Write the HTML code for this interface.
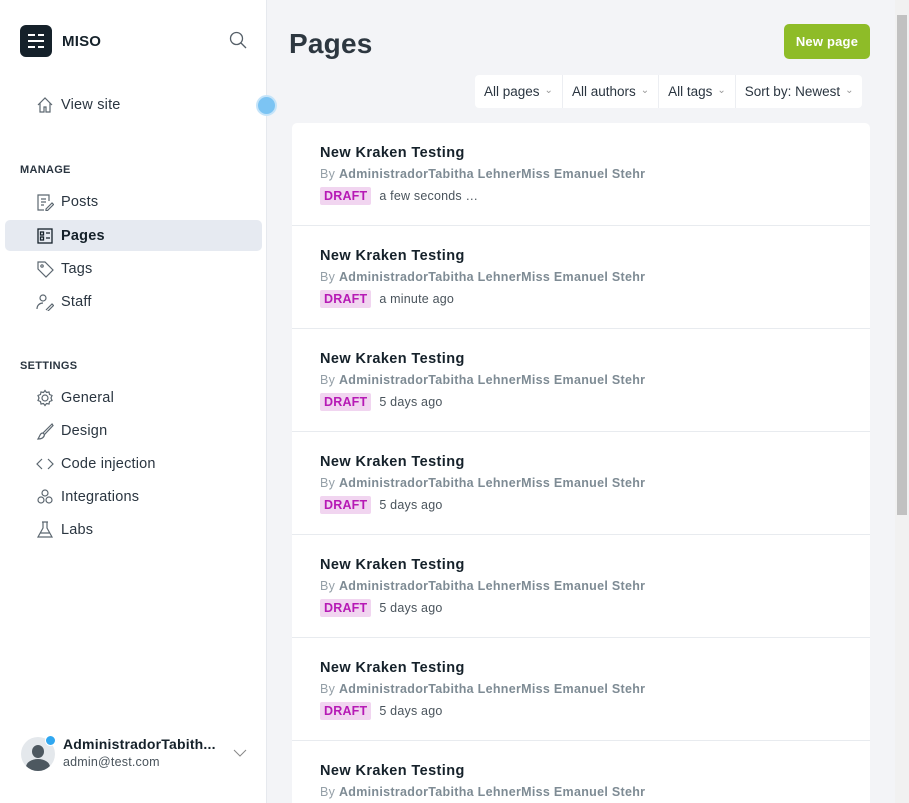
<!DOCTYPE html>
<html style="overflow:hidden;height:803px"><head><meta charset="utf-8"><style>
*{box-sizing:border-box;margin:0;padding:0}
body{width:909px;height:803px;overflow:hidden;font-family:"Liberation Sans",sans-serif;background:#f3f4f7;position:relative;color:#15212a;letter-spacing:.2px}
.side{position:absolute;left:0;top:0;width:267px;height:803px;background:#fff;border-right:1px solid #e6e9ee}
.logo{position:absolute;left:20px;top:25px;width:32px;height:32px;border-radius:6px;background:#15212a}
.logo i{position:absolute;height:2px;background:#fff}
.brand{position:absolute;left:62px;top:33px;font-weight:bold;font-size:15px}
.nav{position:absolute;left:5px;width:257px;height:31px;display:flex;align-items:center;padding-left:32px;font-size:14.5px;color:#2a3540}
.nav svg{position:absolute;left:31px;top:7px}
.nav span{margin-left:24px}
.nav.act{background:#e6eaf1;border-radius:5px;font-weight:bold;color:#15212a}
.hd{position:absolute;left:20px;font-size:11px;font-weight:bold;letter-spacing:.3px;color:#2a3540}
h1{position:absolute;left:289px;top:28px;font-size:28px;font-weight:bold;color:#2d3740}
.btn{position:absolute;left:784px;top:24px;width:86px;height:35px;border-radius:5px;background:#8ebc28;color:#fff;font-weight:bold;font-size:13px;text-align:center;line-height:35px}
.filt{position:absolute;left:475px;top:75px;height:33px;background:#fff;border-radius:4px;display:flex;font-size:13.5px;color:#2a3540;letter-spacing:0}
.filt div{padding:0 9px;line-height:33px;border-right:1px solid #eceef2}
.filt div:last-child{border:0}
.filt div:after{content:"⌄";color:#999;font-size:10px;margin-left:5px;position:relative;top:-3px}
.list{position:absolute;left:292px;top:123px;width:578px;height:680px;background:#fff;border-radius:5px 5px 0 0;overflow:hidden}
.row{height:103px;border-bottom:1px solid #e8ebef;padding:22px 28px 0}
.t{font-weight:bold;font-size:14.5px;color:#15212a;letter-spacing:.4px}
.by{font-size:12.5px;color:#95a0a8;margin-top:6px;letter-spacing:.3px}
.by b{color:#7e8b94}
.m{margin-top:6px;font-size:12.5px;color:#4a545c;display:flex;align-items:center}
.d{background:#f1d5f0;color:#b61ab5;font-weight:bold;padding:2px 4px;border-radius:2px;margin-right:8px;font-size:12.5px}
.sb{position:absolute;left:895px;top:0;width:14px;height:803px;background:#f1f1f1}
.sb i{position:absolute;left:2px;top:15px;width:10px;height:500px;background:#c1c1c1}
</style></head><body>
<div class="side">
<div class="logo"><i style="left:8px;top:9px;width:7px"></i><i style="left:18px;top:9px;width:6px"></i><i style="left:8px;top:15px;width:16px"></i><i style="left:8px;top:21px;width:7px"></i><i style="left:18px;top:21px;width:6px"></i></div>
<div class="brand">MISO</div>
<svg style="position:absolute;left:229px;top:31px" width="18" height="18" fill="none" stroke="#555f68" stroke-width="1.3"><circle cx="7.5" cy="7.5" r="6"/><path d="M12 12l5 5"/></svg>
<div style="position:absolute;left:256px;top:95px;width:21px;height:21px;border-radius:50%;background:#7cc4f3;border:2px solid #c5e4f9"></div>
<div class="nav" style="top:89px"><svg width="18" height="18" fill="none" stroke="#5c6770" stroke-width="1.2"><path d="M2 9L9 2l7 7M4 7v9h4v-5h2v5h4V7"/></svg><span>View site</span></div>
<div class="hd" style="top:164px">MANAGE</div>
<div class="nav" style="top:186px"><svg width="18" height="18" fill="none" stroke="#5c6770" stroke-width="1.2"><path d="M13 8V2H2v15h6M5 6h5M5 9h5M5 12h3M10 16l6-6 1.5 1.5-6 6H10z"/></svg><span>Posts</span></div>
<div class="nav act" style="top:220px"><svg width="18" height="18" fill="none" stroke="#15212a" stroke-width="1.3"><rect x="2" y="2" width="14" height="14"/><rect x="4.5" y="5" width="3" height="3"/><rect x="4.5" y="10" width="3" height="3"/><path d="M10 6h4M10 11h4"/></svg><span>Pages</span></div>
<div class="nav" style="top:253px"><svg width="18" height="18" fill="none" stroke="#5c6770" stroke-width="1.2"><path d="M2 2h7l8 8-7 7-8-8z"/><circle cx="6" cy="6" r="1.2"/></svg><span>Tags</span></div>
<div class="nav" style="top:286px"><svg width="18" height="18" fill="none" stroke="#5c6770" stroke-width="1.2"><circle cx="7" cy="5" r="3"/><path d="M1 16c0-4 3-6 6-6M10 17l6-6 1.5 1.5-6 6"/></svg><span>Staff</span></div>
<div class="hd" style="top:360px">SETTINGS</div>
<div class="nav" style="top:382px"><svg width="18" height="18" fill="none" stroke="#5c6770" stroke-width="1.2"><circle cx="9" cy="9" r="3"/><path d="M9 1.5l1.5 2 2.5-.5.5 2.5 2.5 1-1 2.5 1 2.5-2.5 1-.5 2.5-2.5-.5L9 16.5l-1.5-2-2.5.5-.5-2.5-2.5-1 1-2.5-1-2.5 2.5-1 .5-2.5 2.5.5z"/></svg><span>General</span></div>
<div class="nav" style="top:415px"><svg width="18" height="18" fill="none" stroke="#5c6770" stroke-width="1.2"><path d="M16 2L7 11l1.5 1.5L17 3.5zM7 11c-3 0-3 3-5 6 3 0 6-1 6.5-4.5"/></svg><span>Design</span></div>
<div class="nav" style="top:448px"><svg width="18" height="18" fill="none" stroke="#5c6770" stroke-width="1.2"><path d="M6 4L1 9l5 5M12 4l5 5-5 5"/></svg><span>Code injection</span></div>
<div class="nav" style="top:481px"><svg width="18" height="18" fill="none" stroke="#5c6770" stroke-width="1.2"><circle cx="9" cy="5" r="3"/><circle cx="5" cy="12" r="3"/><circle cx="13" cy="12" r="3"/></svg><span>Integrations</span></div>
<div class="nav" style="top:514px"><svg width="18" height="18" fill="none" stroke="#5c6770" stroke-width="1.2"><path d="M6 1h6M7 1v6L2 16h14L11 7V1M4 12h10"/></svg><span>Labs</span></div>
<div style="position:absolute;left:21px;top:737px;width:34px;height:34px;border-radius:50%;background:#e4e8ec;overflow:hidden"><div style="position:absolute;left:11px;top:8px;width:12px;height:13px;border-radius:50%;background:#4d5860"></div><div style="position:absolute;left:5px;top:22px;width:24px;height:16px;border-radius:50%;background:#4d5860"></div></div>
<div style="position:absolute;left:45px;top:735px;width:11px;height:11px;border-radius:50%;background:#30a7f0;border:1.5px solid #fff"></div>
<div style="position:absolute;left:63px;top:736px;font-weight:bold;font-size:14px">AdministradorTabith...</div>
<div style="position:absolute;left:63px;top:755px;font-size:12.5px;color:#4a545c">admin@test.com</div>
<svg style="position:absolute;left:233px;top:749px" width="14" height="8" fill="none" stroke="#888" stroke-width="1"><path d="M1 1l6 6 6-6"/></svg>
</div>
<h1>Pages</h1>
<div class="btn">New page</div>
<div class="filt"><div>All pages</div><div>All authors</div><div>All tags</div><div>Sort by: Newest</div></div>
<div class="list">
<div class="row"><div class="t">New Kraken Testing</div><div class="by">By <b>AdministradorTabitha LehnerMiss Emanuel Stehr</b></div><div class="m"><span class="d">DRAFT</span>a few seconds …</div></div>
<div class="row"><div class="t">New Kraken Testing</div><div class="by">By <b>AdministradorTabitha LehnerMiss Emanuel Stehr</b></div><div class="m"><span class="d">DRAFT</span>a minute ago</div></div>
<div class="row"><div class="t">New Kraken Testing</div><div class="by">By <b>AdministradorTabitha LehnerMiss Emanuel Stehr</b></div><div class="m"><span class="d">DRAFT</span>5 days ago</div></div>
<div class="row"><div class="t">New Kraken Testing</div><div class="by">By <b>AdministradorTabitha LehnerMiss Emanuel Stehr</b></div><div class="m"><span class="d">DRAFT</span>5 days ago</div></div>
<div class="row"><div class="t">New Kraken Testing</div><div class="by">By <b>AdministradorTabitha LehnerMiss Emanuel Stehr</b></div><div class="m"><span class="d">DRAFT</span>5 days ago</div></div>
<div class="row"><div class="t">New Kraken Testing</div><div class="by">By <b>AdministradorTabitha LehnerMiss Emanuel Stehr</b></div><div class="m"><span class="d">DRAFT</span>5 days ago</div></div>
<div class="row"><div class="t">New Kraken Testing</div><div class="by">By <b>AdministradorTabitha LehnerMiss Emanuel Stehr</b></div><div class="m"><span class="d">DRAFT</span>5 days ago</div></div>
</div>
<div class="sb"><i></i></div>
</body></html>
